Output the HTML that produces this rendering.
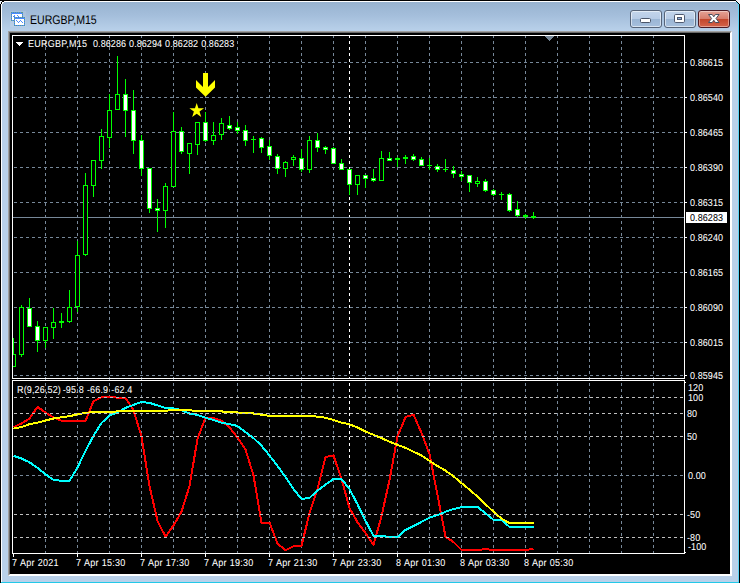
<!DOCTYPE html>
<html lang="en">
<head>
<meta charset="utf-8">
<title>EURGBP,M15</title>
<style>
html,body{margin:0;padding:0;background:#fff;}
body{width:742px;height:583px;overflow:hidden;position:relative;font-family:"Liberation Sans",sans-serif;}
#win{position:absolute;left:0;top:0;width:742px;height:583px;overflow:hidden;background:#fff;}
#edge{position:absolute;left:8px;top:31px;width:724px;height:545px;box-sizing:border-box;border:1px solid;border-color:#a0a0a0 #fff #fff #a0a0a0;}
#edge2{position:absolute;left:9px;top:32px;width:722px;height:543px;box-sizing:border-box;border:1px solid;border-color:#696969 #fff #fff #696969;background:#000;}
.ch{position:absolute;left:0;top:0;}
.t{position:absolute;color:#fff;font-size:10px;line-height:12px;height:12px;white-space:pre;transform-origin:0 0;transform:scaleX(0.9);letter-spacing:0.08px;word-spacing:0.5px;text-rendering:geometricPrecision;-webkit-text-stroke:0.06px currentColor;}
#title{position:absolute;left:30px;top:12px;font-size:12.5px;line-height:16px;color:#000;white-space:nowrap;transform-origin:0 0;transform:scaleX(0.845);text-rendering:geometricPrecision;}
.btn{position:absolute;top:10px;width:32px;height:18px;box-sizing:border-box;border:1px solid #566479;border-radius:3px;background:linear-gradient(#c3d5eb,#b7cce6 47%,#9ab5d4 50%,#a7c0dd);box-shadow:inset 0 0 0 1px rgba(255,255,255,.55);}
.btn.x{border-color:#4c1a24;background:linear-gradient(#e5a397,#d87e6d 47%,#c2452b 50%,#d4644c);box-shadow:inset 0 0 0 1px rgba(255,255,255,.4);}
</style>
</head>
<body>
<div id="win">
<svg class="ch" width="742" height="583" viewBox="0 0 742 583" shape-rendering="crispEdges">
<defs><linearGradient id="tg" x1="0" y1="0" x2="0" y2="1"><stop offset="0" stop-color="#98b3d0"/><stop offset="0.45" stop-color="#a4bedb"/><stop offset="1" stop-color="#b9d1ea"/></linearGradient></defs>
<rect x="0" y="0" width="740" height="583" fill="#b9d1ea"/>
<rect x="2" y="2" width="736" height="29" fill="url(#tg)"/>
<path d="M0 0h736v1h-736zM0 4h1v579h-1zM739 4h1v579h-1zM2 1h2v1h-2zM1 2h1v2h-1zM736 1h1v1h-1zM737 2h1v1h-1zM738 3h1v1h-1z" fill="#000"/>
<path d="M0 1h2v1h-1v2h-1zM736 0h4v4h-1v-1h-1v-1h-1v-1h-1z" fill="#eef3f9"/>
<path d="M4 1h732v1h-732zM1 4h1v578h-1zM2 2h2v1h-1v1h-1z" fill="#fff"/>
<path d="M738 4h1v579h-1zM736 2h1v1h-1zM737 3h1v1h-1z" fill="#5cd5f6"/>
<rect x="1" y="582" width="738" height="1" fill="#22c8e8"/>
</svg>
<div id="edge"></div><div id="edge2"></div>
<svg class="ch" width="742" height="583" viewBox="0 0 742 583" shape-rendering="crispEdges">
<rect x="10" y="33" width="720" height="541" fill="#000"/>
<path d="M45.5 35V554M77.5 35V554M109.5 35V554M141.5 35V554M173.5 35V554M205.5 35V554M237.5 35V554M269.5 35V554M301.5 35V554M333.5 35V554M365.5 35V554M397.5 35V554M429.5 35V554M461.5 35V554M493.5 35V554M525.5 35V554M557.5 35V554M589.5 35V554M621.5 35V554M653.5 35V554" stroke="#778899" stroke-width="1" stroke-dasharray="3 3" fill="none"/>
<path d="M349.5 35V554" stroke="#fff" stroke-width="1" stroke-dasharray="3 3" fill="none"/>
<path d="M14 62.5H684M14 97.5H684M14 132.5H684M14 167.5H684M14 202.5H684M14 237.5H684M14 272.5H684M14 307.5H684M14 342.5H684M14 375.5H684M14 475.5H684" stroke="#778899" stroke-width="1" stroke-dasharray="3 3" fill="none"/>
<rect x="13" y="217" width="671" height="1" fill="#778899"/>
<clipPath id="cc"><rect x="13" y="36" width="671" height="342"/></clipPath>
<g clip-path="url(#cc)">
<path d="M13 338h1v29h-1zM11 354h5v13h-5zM21 305h1v52h-1zM19 307h5v48h-5zM29 298h1v29h-1zM27 308h5v19h-5zM37 321h1v31h-1zM35 326h5v15h-5zM45 327h1v21h-1zM43 327h5v14h-5zM53 308h1v31h-1zM51 322h5v6h-5zM61 313h1v15h-1zM59 321h5v2h-5zM69 290h1v33h-1zM67 307h5v15h-5zM77 241h1v71h-1zM75 255h5v52h-5zM85 173h1v83h-1zM83 185h5v70h-5zM93 160h1v37h-1zM91 160h5v26h-5zM101 129h1v40h-1zM99 136h5v25h-5zM109 94h1v54h-1zM107 110h5v28h-5zM117 56h1v54h-1zM115 94h5v16h-5zM125 79h1v58h-1zM123 94h5v17h-5zM133 90h1v64h-1zM131 110h5v31h-5zM141 135h1v41h-1zM139 140h5v29h-5zM149 168h1v45h-1zM147 168h5v41h-5zM157 199h1v33h-1zM155 208h5v3h-5zM165 183h1v45h-1zM163 186h5v25h-5zM173 112h1v75h-1zM171 131h5v56h-5zM181 127h1v27h-1zM179 131h5v21h-5zM189 143h1v31h-1zM187 143h5v11h-5zM197 122h1v33h-1zM195 122h5v23h-5zM205 112h1v30h-1zM203 122h5v19h-5zM213 122h1v23h-1zM211 135h5v6h-5zM221 118h1v22h-1zM219 123h5v12h-5zM229 116h1v14h-1zM227 125h5v4h-5zM237 122h1v12h-1zM235 127h5v4h-5zM245 125h1v21h-1zM243 130h5v11h-5zM253 136h1v17h-1zM251 139h5v1h-5zM261 137h1v16h-1zM259 138h5v10h-5zM269 140h1v20h-1zM267 146h5v10h-5zM277 154h1v20h-1zM275 156h5v13h-5zM285 161h1v16h-1zM283 162h5v7h-5zM293 155h1v11h-1zM291 157h5v3h-5zM301 149h1v23h-1zM299 158h5v12h-5zM309 136h1v37h-1zM307 140h5v30h-5zM317 133h1v19h-1zM315 140h5v8h-5zM325 146h1v8h-1zM323 147h5v3h-5zM333 147h1v17h-1zM331 148h5v16h-5zM341 159h1v11h-1zM339 163h5v7h-5zM349 169h1v26h-1zM347 169h5v16h-5zM357 175h1v20h-1zM355 175h5v10h-5zM365 175h1v13h-1zM363 175h5v4h-5zM373 169h1v13h-1zM371 178h5v3h-5zM381 151h1v30h-1zM379 158h5v23h-5zM389 152h1v9h-1zM387 158h5v3h-5zM397 157h1v10h-1zM395 158h5v2h-5zM405 155h1v9h-1zM403 157h5v2h-5zM413 154h1v7h-1zM411 156h5v4h-5zM421 157h1v9h-1zM419 159h5v7h-5zM429 158h1v12h-1zM427 165h5v1h-5zM437 164h1v8h-1zM435 166h5v4h-5zM445 159h1v13h-1zM443 169h5v1h-5zM453 166h1v12h-1zM451 170h5v4h-5zM461 171h1v10h-1zM459 174h5v3h-5zM469 175h1v17h-1zM467 175h5v8h-5zM477 177h1v10h-1zM475 181h5v3h-5zM485 179h1v13h-1zM483 181h5v10h-5zM493 189h1v7h-1zM491 190h5v5h-5zM501 192h1v8h-1zM499 194h5v1h-5zM509 193h1v19h-1zM507 194h5v17h-5zM517 201h1v16h-1zM515 209h5v7h-5zM525 214h1v5h-1zM523 215h5v2h-5zM533 212h1v7h-1zM531 216h5v2h-5z" fill="#00ff00"/>
<path d="M12 355h3v11h-3zM20 308h3v46h-3zM44 328h3v12h-3zM52 323h3v4h-3zM68 308h3v13h-3zM76 256h3v50h-3zM84 186h3v68h-3zM92 161h3v24h-3zM100 137h3v23h-3zM108 111h3v26h-3zM116 95h3v14h-3zM164 187h3v23h-3zM172 132h3v54h-3zM188 144h3v9h-3zM196 123h3v21h-3zM212 136h3v4h-3zM220 124h3v10h-3zM284 163h3v5h-3zM292 158h3v1h-3zM308 141h3v28h-3zM356 176h3v8h-3zM380 159h3v21h-3zM476 182h3v1h-3z" fill="#000"/>
<path d="M28 309h3v17h-3zM36 327h3v13h-3zM124 95h3v15h-3zM132 111h3v29h-3zM140 141h3v27h-3zM148 169h3v39h-3zM156 209h3v1h-3zM180 132h3v19h-3zM204 123h3v17h-3zM228 126h3v2h-3zM236 128h3v2h-3zM244 131h3v9h-3zM260 139h3v8h-3zM268 147h3v8h-3zM276 157h3v11h-3zM300 159h3v10h-3zM316 141h3v6h-3zM324 148h3v1h-3zM332 149h3v14h-3zM340 164h3v5h-3zM348 170h3v14h-3zM364 176h3v2h-3zM372 179h3v1h-3zM388 159h3v1h-3zM412 157h3v2h-3zM420 160h3v5h-3zM436 167h3v2h-3zM452 171h3v2h-3zM460 175h3v1h-3zM468 176h3v6h-3zM484 182h3v8h-3zM492 191h3v3h-3zM508 195h3v15h-3zM516 210h3v5h-3z" fill="#fff"/>
</g>
<path d="M203 73h5v14l7-7v7.500l-9.500 9.300l-9.500-9.300v-7.500l7 7z" fill="#ffff00" shape-rendering="geometricPrecision"/>
<polygon points="196.70,103.00 198.43,108.31 204.02,108.32 199.51,111.61 201.23,116.93 196.70,113.65 192.17,116.93 193.89,111.61 189.38,108.32 194.97,108.31" fill="#ffff00" shape-rendering="geometricPrecision"/>
<path d="M544 36h10l-5 5z" fill="#778899"/>
<polyline points="13.5,427.1 21.5,423.5 29.5,418.5 37.5,406.9 45.5,412.5 53.5,417.4 61.5,420.8 69.5,420.8 77.5,420.8 85.5,420.8 93.5,401.1 101.5,397.4 109.5,396.9 117.5,397.7 125.5,397.8 133.5,410.2 141.5,436.6 149.5,486.1 157.5,520.8 165.5,536.7 173.5,525.4 181.5,511.8 189.5,486.1 197.5,438.9 205.5,417.7 213.5,418.0 221.5,420.8 229.5,427.5 237.5,437.4 245.5,449.4 253.5,475.5 261.5,522.6 269.5,522.6 277.5,543.5 285.5,550.3 293.5,546.2 301.5,545.7 309.5,513.3 317.5,489.1 325.5,457.0 333.5,455.5 341.5,479.0 349.5,508.0 357.5,522.3 365.5,532.9 373.5,545.0 381.5,516.3 389.5,480.0 397.5,436.6 405.5,417.0 413.5,414.7 421.5,432.8 429.5,454.0 437.5,495.0 445.5,536.7 453.5,542.0 461.5,550.0 469.5,550.0 477.5,550.0 485.5,549.2 493.5,550.0 501.5,550.0 509.5,550.0 517.5,550.0 525.5,550.0 533.5,549.0" stroke="#ff0000" stroke-width="2" fill="none" stroke-linejoin="round"/>
<polyline points="13.5,455.8 21.5,458.5 29.5,462.3 37.5,467.8 45.5,474.3 53.5,479.8 61.5,480.8 69.5,480.8 77.5,467.5 85.5,450.9 93.5,435.8 101.5,423.0 109.5,415.5 117.5,412.5 125.5,407.9 133.5,404.9 141.5,401.9 149.5,402.9 157.5,405.4 165.5,407.9 173.5,408.4 181.5,410.2 189.5,413.5 197.5,415.0 205.5,417.7 213.5,420.0 221.5,422.6 229.5,424.1 237.5,426.0 245.5,432.1 253.5,438.1 261.5,445.7 269.5,455.5 277.5,466.0 285.5,477.0 293.5,489.1 301.5,498.9 309.5,497.9 317.5,490.6 325.5,484.6 333.5,478.9 341.5,478.9 349.5,489.1 357.5,504.2 365.5,520.8 373.5,535.9 381.5,535.9 389.5,537.1 397.5,537.1 405.5,529.9 413.5,526.1 421.5,521.9 429.5,517.8 437.5,515.1 445.5,511.8 453.5,509.0 461.5,507.2 469.5,506.9 477.5,506.9 485.5,513.3 493.5,519.8 501.5,519.8 509.5,526.9 517.5,526.9 525.5,526.9 533.5,526.9" stroke="#00ffff" stroke-width="2" fill="none" stroke-linejoin="round"/>
<polyline points="13.5,428.6 21.5,427.1 29.5,424.2 37.5,422.6 45.5,420.5 53.5,418.5 61.5,417.3 69.5,416.2 77.5,414.4 85.5,412.9 93.5,412.0 101.5,412.0 109.5,412.0 117.5,411.4 125.5,410.9 133.5,410.9 141.5,410.9 149.5,410.9 157.5,410.9 165.5,410.9 173.5,409.7 181.5,409.7 189.5,410.2 197.5,411.2 205.5,411.2 213.5,411.2 221.5,411.4 229.5,412.2 237.5,412.5 245.5,412.9 253.5,413.5 261.5,414.7 269.5,415.9 277.5,415.9 285.5,415.9 293.5,415.9 301.5,415.9 309.5,415.9 317.5,416.7 325.5,417.7 333.5,420.0 341.5,422.6 349.5,424.2 357.5,427.5 365.5,431.6 373.5,434.8 381.5,438.1 389.5,441.6 397.5,444.9 405.5,447.9 413.5,451.7 421.5,455.5 429.5,460.8 437.5,466.0 445.5,470.6 453.5,476.3 461.5,483.1 469.5,489.6 477.5,496.7 485.5,504.2 493.5,511.8 501.5,518.6 509.5,523.1 517.5,523.1 525.5,523.1 533.5,523.1" stroke="#ffff00" stroke-width="2" fill="none" stroke-linejoin="round"/>
<path d="M14 397.5H684M14 413.5H684M14 436.5H684M14 514.5H684M14 537.5H684" stroke="#c0c0c0" stroke-width="1" stroke-dasharray="3 3" fill="none"/>
<path d="M12.5 35.5H684.5V378.5H12.5zM12.5 380.5H684.5V553.5H12.5z" stroke="#fff" stroke-width="1" fill="none"/>
<rect x="12" y="379" width="673" height="1" fill="#000"/>
<path d="M45 379h1v1h-1zM77 379h1v1h-1zM109 379h1v1h-1zM141 379h1v1h-1zM173 379h1v1h-1zM205 379h1v1h-1zM237 379h1v1h-1zM269 379h1v1h-1zM301 379h1v1h-1zM333 379h1v1h-1zM365 379h1v1h-1zM397 379h1v1h-1zM429 379h1v1h-1zM461 379h1v1h-1zM493 379h1v1h-1zM525 379h1v1h-1zM557 379h1v1h-1zM589 379h1v1h-1zM621 379h1v1h-1zM653 379h1v1h-1z" fill="#778899"/>
<path d="M685 62h2v1h-2zM685 97h2v1h-2zM685 132h2v1h-2zM685 167h2v1h-2zM685 202h2v1h-2zM685 237h2v1h-2zM685 272h2v1h-2zM685 307h2v1h-2zM685 342h2v1h-2zM685 375h2v1h-2zM685 382h1v1h-1zM685 552h1v1h-1zM13 554h1v3h-1zM77 554h1v3h-1zM141 554h1v3h-1zM205 554h1v3h-1zM269 554h1v3h-1zM333 554h1v3h-1zM397 554h1v3h-1zM461 554h1v3h-1zM525 554h1v3h-1z" fill="#fff"/>
<rect x="686" y="212" width="41" height="11" fill="#fff"/>
<path d="M16 42h7v1h-1v1h-1v1h-1v1h-1v-1h-1v-1h-1v-1h-1z" fill="#fff"/>
</svg>
<div class="t" style="left:690px;top:58px">0.86615</div>
<div class="t" style="left:690px;top:93px">0.86540</div>
<div class="t" style="left:690px;top:128px">0.86465</div>
<div class="t" style="left:690px;top:163px">0.86390</div>
<div class="t" style="left:690px;top:198px">0.86315</div>
<div class="t" style="left:690px;top:233px">0.86240</div>
<div class="t" style="left:690px;top:268px">0.86165</div>
<div class="t" style="left:690px;top:303px">0.86090</div>
<div class="t" style="left:690px;top:338px">0.86015</div>
<div class="t" style="left:690px;top:371px">0.85945</div>
<div class="t" style="left:690px;top:213px;color:#000">0.86283</div>
<div class="t" style="left:688px;top:383px">120</div>
<div class="t" style="left:688px;top:393px">100</div>
<div class="t" style="left:687px;top:409px">80</div>
<div class="t" style="left:687px;top:432px">50</div>
<div class="t" style="left:688px;top:471px">0.00</div>
<div class="t" style="left:687px;top:510px">-50</div>
<div class="t" style="left:687px;top:533px">-80</div>
<div class="t" style="left:688px;top:542px">-100</div>
<div class="t" style="left:11.5px;top:558px;letter-spacing:0.26px">7 Apr 2021</div>
<div class="t" style="left:75.5px;top:558px;letter-spacing:0.26px">7 Apr 15:30</div>
<div class="t" style="left:139.5px;top:558px;letter-spacing:0.26px">7 Apr 17:30</div>
<div class="t" style="left:203.5px;top:558px;letter-spacing:0.26px">7 Apr 19:30</div>
<div class="t" style="left:267.5px;top:558px;letter-spacing:0.26px">7 Apr 21:30</div>
<div class="t" style="left:331.5px;top:558px;letter-spacing:0.26px">7 Apr 23:30</div>
<div class="t" style="left:395.5px;top:558px;letter-spacing:0.26px">8 Apr 01:30</div>
<div class="t" style="left:459.5px;top:558px;letter-spacing:0.26px">8 Apr 03:30</div>
<div class="t" style="left:523.5px;top:558px;letter-spacing:0.26px">8 Apr 05:30</div>
<div class="t" style="left:28.300px;top:39px;letter-spacing:0.27px">EURGBP,M15</div>
<div class="t" style="left:92.600px;top:39px">0.86286 0.86294 0.86282 0.86283</div>
<div class="t" style="left:16.500px;top:385px;letter-spacing:0.16px">R(9,26,52)<span style="margin-left:-1.6px"> -95.8 -66.9 -62.4</span></div>
<svg class="ch" width="40" height="32" viewBox="0 0 40 32" shape-rendering="crispEdges">
<rect x="10" y="11" width="16" height="16" fill="#fff" fill-opacity="0.1"/>
<rect x="11" y="12" width="12" height="9" fill="#4c8cff"/><rect x="12" y="14" width="10" height="6" fill="#fff"/>
<path d="M11.500 12V21M22.500 12V21M11 12.500H23M11 20.500H23" stroke="#5b9a8e" stroke-width="1" stroke-dasharray="1 1" fill="none"/>
<path d="M13 16.500h2M14 15.500h1M17 15.500h1M18 16.500h1M19 17.500h1" stroke="#4c8cff" stroke-width="1"/>
<rect x="14" y="17" width="11" height="9" fill="#4c8cff"/><rect x="15" y="19" width="9" height="6" fill="#fff"/>
<path d="M14.500 17V26M24.500 17V26M14 17.500H25M14 25.500H25" stroke="#5b9a8e" stroke-width="1" stroke-dasharray="1 1" fill="none"/>
<path d="M16 20.500h1M17 21.500h1M18 22.500h1M19 21.500h1M20 20.500h1M21 21.500h1M22 22.500h1" stroke="#4c8cff" stroke-width="1"/>
</svg>
<div id="title">EURGBP,M15</div>
<div class="btn" style="left:630px"></div>
<div class="btn" style="left:664px"></div>
<div class="btn x" style="left:698px"></div>
<svg class="ch" width="742" height="32" viewBox="0 0 742 32">
<rect x="640.5" y="18.5" width="10" height="4" rx="1" fill="#fff" stroke="#4a5568"/>
<rect x="674.5" y="14.5" width="10" height="8" rx="1.2" fill="#fff" stroke="#4f5a70"/>
<rect x="677.5" y="17.5" width="4" height="2" fill="#8fb0dc" stroke="#4f5a70"/>
<path d="M708.5 14.500h3.700l1.600 2.300l1.600-2.300h3.700l-3.100 4l3.100 4h-3.700l-1.600-2.300l-1.600 2.300h-3.700l3.100-4z" fill="#fff" stroke="#4a4f60" stroke-width="1" stroke-linejoin="round"/>
</svg>
</div>
</body>
</html>
